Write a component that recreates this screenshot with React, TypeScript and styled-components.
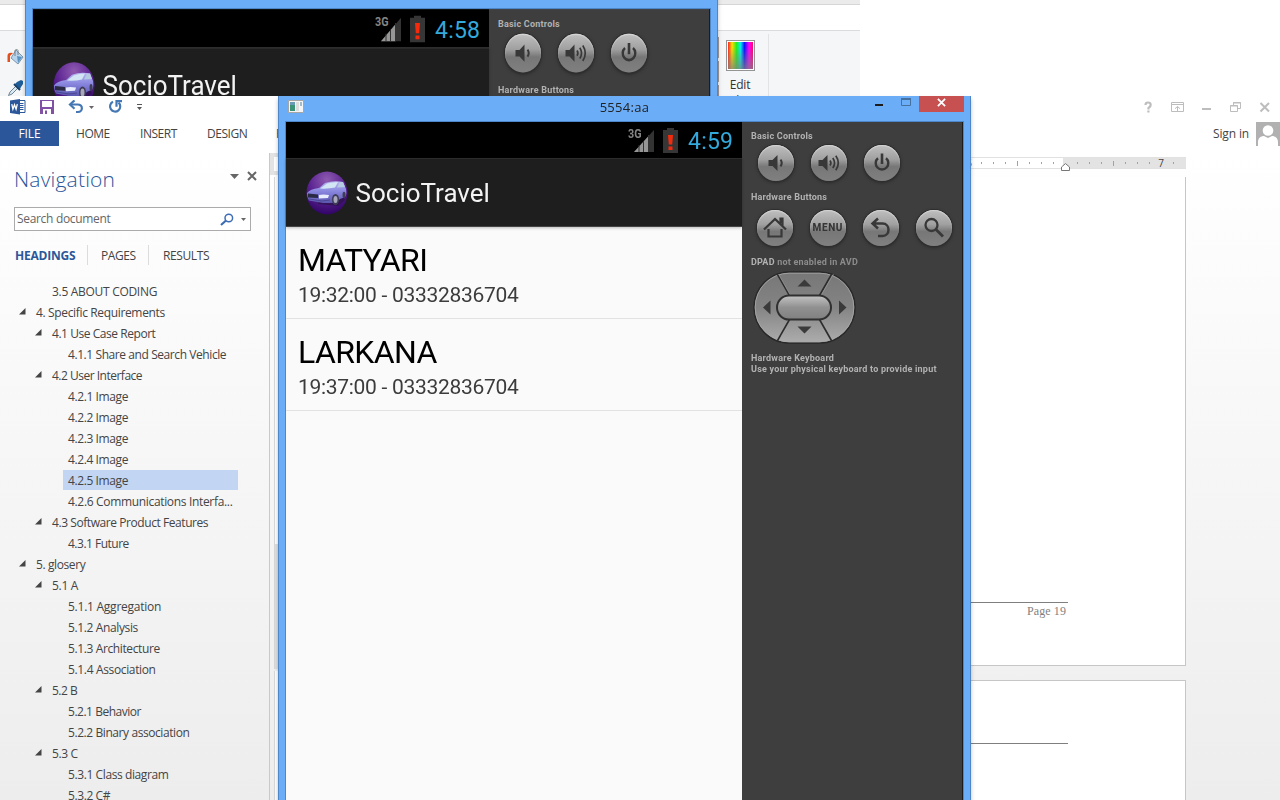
import React from "react";
import styled, { createGlobalStyle } from "styled-components";

const GlobalStyle = createGlobalStyle`
  * { box-sizing: border-box; }
  html, body { margin: 0; padding: 0; }
  body { width: 1280px; height: 800px; overflow: hidden; background: #fff; }
  svg { display: block; flex: none; }
`;

const UI = `"Open Sans", "Noto Sans", sans-serif`;
const DROID = `Roboto, "Noto Sans", sans-serif`;

const Desktop = styled.div`
  position: relative;
  display: flex;
  flex-direction: column;
  width: 1280px;
  height: 800px;
  overflow: hidden;
  font-family: ${UI};
`;

/* ---------- Paint window (top) ---------- */

const PaintWindow = styled.section`
  position: relative;
  flex: none;
  width: 860px;
  height: 96px;
  overflow: hidden;
  display: flex;
  flex-direction: column;
`;

const PaintTitle = styled.div`
  flex: none;
  height: 5px;
  background: #ebebeb;
  border-bottom: 1px solid #d6d6d6;
`;

const PaintTabs = styled.div`
  flex: none;
  height: 26px;
  background: #fff;
  border-bottom: 1px solid #dadbdc;
`;

const PaintRibbon = styled.div`
  flex: 1;
  display: flex;
  justify-content: space-between;
  background: #f5f6f7;
`;

const PaintTools = styled.div`
  display: flex;
  flex-direction: column;
  gap: 14px;
  padding: 17px 0 0 7px;
`;

const PaletteEdge = styled.div`
  flex: none;
  width: 1px;
  height: 59px;
  margin: 6px 0 0 auto;
  background: repeating-linear-gradient(to bottom, #a79a96 0, #a79a96 21px, #f5f6f7 21px, #f5f6f7 24px);
`;

const EditColors = styled.div`
  display: flex;
  flex-direction: column;
  align-items: center;
  width: 57px;
  height: 62px;
  margin: 3px 91px 0 -7px;
  padding-top: 6px;
  border-right: 1px solid #e2e3e4;
  font-size: 12px;
  line-height: 16px;
  letter-spacing: -0.2px;
  color: #333;
  span { width: 50px; text-align: center; }
`;

const Spectrum = styled.div`
  width: 29px;
  height: 31px;
  flex: none;
  margin: 0 0 6px 1px;
  border: 1px solid #949494;
  padding: 1px;
  background:
    linear-gradient(to bottom, rgba(128,128,128,0) 20%, rgba(128,128,128,.75)) content-box,
    linear-gradient(to right, #f22, #fd0 16%, #2e2 34%, #0ee 50%, #11f 66%, #f0f 84%, #f06) content-box,
    #fff;
  box-shadow: 0 0 0 1px #fff inset;
`;

/* ---------- Word window ---------- */

const WordWindow = styled.section`
  flex: 1;
  display: flex;
  flex-direction: column;
  min-height: 0;
  background: linear-gradient(to bottom, #fff 0, #fff 55px, #ededed 704px);
  color: #444;
`;

const WordTitleBar = styled.header`
  flex: none;
  display: flex;
  justify-content: space-between;
  height: 25px;
  padding: 0 9px 0 9px;
`;

const QuickAccess = styled.div`
  display: flex;
  align-items: center;
  height: 22px;
`;

const Gap = styled.i<{ $w: number }>`
  flex: none;
  width: ${(p) => p.$w}px;
`;

const Controls = styled.div`
  display: flex;
  align-items: center;
  height: 22px;
`;

const TabRow = styled.nav`
  flex: none;
  display: flex;
  align-items: center;
  height: 25px;
  font-size: 12px;
`;

const FileTab = styled.div`
  width: 59px;
  height: 25px;
  line-height: 25px;
  text-align: center;
  background: #2b579a;
  color: #fff;
  letter-spacing: -0.1px;
`;

const Tab = styled.div<{ $w: number }>`
  width: ${(p) => p.$w}px;
  line-height: 25px;
  white-space: nowrap;
  letter-spacing: -0.45px;
`;

const Account = styled.div`
  display: flex;
  align-items: center;
  gap: 7px;
  margin-left: auto;
  letter-spacing: -0.15px;
`;

const WordBody = styled.div`
  flex: 1;
  display: flex;
  min-height: 0;
`;

const NavPane = styled.aside`
  flex: none;
  width: 269px;
  padding: 20px 0 0 14px;
  overflow: hidden;
`;

const NavHeader = styled.div`
  display: flex;
  align-items: center;
  height: 26px;
  padding-right: 12px;
  svg { margin-bottom: 6px; }
`;

const NavTitle = styled.h1`
  flex: 1;
  margin: 0;
  font-size: 21px;
  font-weight: 300;
  letter-spacing: 0.2px;
  color: #2b579a;
`;

const SearchBox = styled.div`
  display: flex;
  align-items: center;
  width: 237px;
  height: 24px;
  margin-top: 15px;
  padding: 0 4px 0 2px;
  border: 1px solid #ababab;
  background: #fff;
  font-size: 12px;
  letter-spacing: -0.32px;
  color: #666;
`;

const SearchHint = styled.span`
  flex: 1;
  line-height: 18px;
`;

const NavTabs = styled.div`
  display: flex;
  align-items: center;
  height: 20px;
  margin-top: 14px;
  font-size: 12px;
`;

const NavTab = styled.div<{ $w: number; $pad: number; $active?: boolean; $last?: boolean }>`
  width: ${(p) => p.$w}px;
  height: 20px;
  line-height: 21px;
  padding-left: ${(p) => p.$pad}px;
  border-right: ${(p) => (p.$last ? "none" : "1px solid #dcdcdc")};
  font-weight: ${(p) => (p.$active ? 700 : 400)};
  color: ${(p) => (p.$active ? "#2b579a" : "#444")};
  letter-spacing: ${(p) => (p.$active ? -0.2 : -0.4)}px;
  white-space: nowrap;
`;

const Tree = styled.ul`
  list-style: none;
  margin: 16px 0 0;
  padding: 0;
  display: flex;
  flex-direction: column;
  gap: 1px;
`;

const TreeRow = styled.li<{ $level: number }>`
  display: flex;
  align-items: center;
  height: 20px;
  padding-left: ${(p) => p.$level * 16 + 1}px;
  font-size: 12px;
  white-space: nowrap;
`;

const Twisty = styled.span`
  width: 16px;
  padding: 0 0 1px 4px;
`;

const Label = styled.span<{ $selected?: boolean; $wide: boolean; $spacing: number }>`
  height: 20px;
  line-height: 22px;
  padding-left: 5px;
  width: ${(p) => (p.$wide ? "175px" : "auto")};
  background: ${(p) => (p.$selected ? "#c2d5f2" : "transparent")};
  letter-spacing: ${(p) => p.$spacing}px;
`;

const VerticalRuler = styled.div`
  flex: none;
  display: flex;
  flex-direction: column;
  width: 20px;
  margin-top: 7px;
  border-left: 1px solid #c9c9c9;
`;

const TabSelector = styled.div`
  flex: none;
  height: 22px;
  background: #fff;
  border: 4px solid #e3e3e3;
`;

const RulerTrack = styled.div<{ $h: number; $margin?: boolean }>`
  flex: none;
  height: ${(p) => p.$h}px;
  margin-left: 4px;
  margin-top: ${(p) => (p.$margin ? 0 : 2)}px;
  border-left: 1px solid #d8d8d8;
  background: ${(p) => (p.$margin ? "#e1e1e1" : "#fff")};
`;

const DocArea = styled.main`
  flex: 1;
  display: flex;
  flex-direction: column;
  padding: 11px 94px 0 0;
  overflow: hidden;
`;

const Ruler = styled.div`
  flex: none;
  display: flex;
  justify-content: flex-end;
  height: 12px;
  padding-right: 7px;
  border: 1px solid #e1e1e1;
  border-right: 0;
  background: linear-gradient(to left, #e3e3e3 123px, #fff 123px);
`;

const RulerCell = styled.div`
  position: relative;
  display: flex;
  justify-content: center;
  align-items: center;
  width: 12px;
  font-size: 10px;
  line-height: 12px;
  color: #444;
`;

const Tick = styled.i<{ $tall: boolean }>`
  width: 1px;
  height: ${(p) => (p.$tall ? 5 : 2)}px;
  background: #a2a2a2;
`;

const IndentMarker = styled.svg`
  position: absolute;
  left: 2px;
  top: 5px;
`;

const Page = styled.article<{ $h: number; $first?: boolean }>`
  flex: none;
  display: flex;
  flex-direction: column;
  align-items: flex-end;
  height: ${(p) => p.$h}px;
  margin-top: ${(p) => (p.$first ? 8 : 14)}px;
  padding-right: 117px;
  border: 1px solid #c6c6c6;
  border-top-width: ${(p) => (p.$first ? 0 : 1)}px;
  background: #fff;
  font-family: "Liberation Serif", serif;
  font-size: 12px;
`;

const Rule = styled.div<{ $top: number }>`
  width: 600px;
  height: 1px;
  flex: none;
  margin-top: ${(p) => p.$top}px;
  background: #7f7f7f;
`;

const PageNumber = styled.div`
  padding: 1px 2px 0 0;
  line-height: 15px;
  letter-spacing: 0.1px;
  color: #7f7f7f;
`;

/* ---------- Emulator windows ---------- */

const EmuWindow = styled.section<{ $x: number; $y: number; $h: number }>`
  position: absolute;
  left: ${(p) => p.$x}px;
  top: ${(p) => p.$y}px;
  width: 693px;
  height: ${(p) => p.$h}px;
  padding: 0 7px;
  border: 1px solid #4d87c9;
  border-width: 0 1px;
  background: #6badf6;
  box-shadow: 0 3px 4px rgba(0, 0, 0, 0.25);
  overflow: hidden;
`;

const EmuTitleBar = styled.header`
  display: flex;
  align-items: flex-start;
  height: 25px;
  padding: 4px 0 0 2px;
`;

const EmuTitle = styled.div`
  flex: 1;
  padding-left: 70px;
  margin-top: -2px;
  text-align: center;
  font-size: 13px;
  line-height: 18px;
  letter-spacing: 0.3px;
  color: #222;
`;

const WindowButtons = styled.div`
  display: flex;
  align-items: flex-start;
  margin: -4px -1px 0 0;
`;

const CloseButton = styled.div`
  display: flex;
  justify-content: center;
  width: 45px;
  height: 16px;
  margin-left: 8px;
  padding-top: 2px;
  background: #c75050;
`;

const Client = styled.div<{ $stretch: number }>`
  display: flex;
  width: 679px;
  height: 679px;
  margin-left: -1px;
  border: 1px solid #4d87c9;
  border-bottom: 0;
  transform: ${(p) => (p.$stretch === 1 ? "none" : `scaleY(${p.$stretch})`)};
  transform-origin: 0 0;
`;

const Screen = styled.div`
  display: flex;
  flex-direction: column;
  width: 456px;
  font-family: ${DROID};
  background: #fafafa;
`;

const StatusBar = styled.div`
  flex: none;
  display: flex;
  justify-content: flex-end;
  align-items: center;
  height: 36px;
  padding: 0 9px 0 0;
  background: #000;
`;

const Clock = styled.span`
  width: 45px;
  margin: 3px 0 0 10px;
  font-size: 23px;
  line-height: 33px;
  letter-spacing: 0.2px;
  color: #33a9dc;
  white-space: nowrap;
`;

const ActionBar = styled.div`
  flex: none;
  display: flex;
  align-items: center;
  gap: 7.5px;
  height: 69px;
  padding: 0 0 0 20px;
  background: #1e1e1e;
  border-top: 1px solid #2c2c2c;
  border-bottom: 1px solid #444;
  box-shadow: 0 1px 3px rgba(0, 0, 0, 0.25);
  z-index: 1;
`;

const AppName = styled.span`
  font-size: 26px;
  line-height: 30px;
  color: #f3f3f3;
`;

const Trip = styled.div`
  flex: none;
  display: flex;
  flex-direction: column;
  height: 92px;
  padding: 14px 0 0 12px;
  border-bottom: 1px solid #e2e2e2;
`;

const City = styled.div`
  font-size: 32px;
  line-height: 38px;
  letter-spacing: -0.6px;
  color: #000;
`;

const Detail = styled.div`
  padding-top: 1px;
  font-size: 21px;
  line-height: 30px;
  letter-spacing: -0.3px;
  color: #3c3c3c;
`;

const Skin = styled.div`
  flex: 1;
  padding: 9px 0 0 9px;
  border-right: 1px solid #1c1c1c;
  background: #3e3e3e;
  font-family: ${DROID};
  font-size: 9px;
  font-weight: 700;
  line-height: 11px;
  letter-spacing: 0.22px;
  color: #b2b2b2;
  white-space: nowrap;
`;

const SkinLabel = styled.div<{ $top?: number }>`
  margin-top: ${(p) => p.$top || 0}px;
  span { color: #8c8c8c; }
`;

const ButtonRow = styled.div<{ $top: number; $left: number }>`
  display: flex;
  gap: 17.3px;
  margin-top: ${(p) => p.$top}px;
  padding-left: ${(p) => p.$left}px;
`;

const RoundButton = styled.div`
  flex: none;
  display: flex;
  align-items: center;
  justify-content: center;
  width: 36px;
  height: 36px;
  border-radius: 50%;
  background: linear-gradient(to bottom, #bfbfbf, #a0a0a0 40%, #777 60%, #808080);
  box-shadow: 0 0 0 1px #2f2f2f, 0 1px 3px 1px #2a2a2a, inset 0 1px 1px #d6d6d6;
  font-size: 10px;
  font-weight: 800;
  line-height: 13px;
  letter-spacing: 0.6px;
  color: #363636;
`;

/* ---------- Drawings ---------- */

const BucketIcon = () => (
  <svg width="17" height="18" viewBox="0 0 17 18">
    <path d="M9 2 16 9l-5 7-7-6z" fill="#b9d5ee" stroke="#6f8ea8" strokeWidth=".9" />
    <path d="M10 8l5 1-4 6z" fill="#5b94c4" />
    <path d="M8 8V2.500q1.500-3 3 0V7" fill="none" stroke="#777" strokeWidth=".9" />
    <path d="M.5 14V8q0-4 5.500-3L3 8v6z" fill="#e1501f" />
  </svg>
);

const DropperIcon = () => (
  <svg width="17" height="17" viewBox="0 0 17 17">
    <path d="M1.500 15.500 3 12l6-6 2 2-6 6z" fill="#dceaf4" stroke="#60788a" strokeWidth=".9" />
    <path d="M8 4l5 5 1-2 2-3V1l-2-1-4 2z" fill="#1e5e99" />
    <path d="M7 4l6 6" stroke="#153e69" strokeWidth="2" />
  </svg>
);

const WordLogo = () => (
  <svg width="18" height="18" viewBox="0 0 18 18">
    <path d="M8 2.500h8v12H8z" fill="#fff" stroke="#2b579a" />
    <path d="M10 5.500h4.500M10 7.500h4.500M10 9.500h4.500M10 11.500h4.500" stroke="#2b579a" strokeWidth="1" />
    <path d="M1 2.500 11 1v15.500L1 15z" fill="#2b579a" />
    <path d="M2.800 6.200l1.100 5L5.500 6.700l1.600 4.500 1.200-5" fill="none" stroke="#fff" strokeWidth="1.300" />
  </svg>
);

const SaveIcon = () => (
  <svg width="14" height="14" viewBox="0 0 14 14">
    <path d="M0 0h14v14H0z" fill="#8151a5" />
    <path d="M2 1h10v6H2zM3 9h8v5H3z" fill="#fff" />
    <path d="M5 10.500h2V14H5z" fill="#8151a5" />
  </svg>
);

const UndoIcon = () => (
  <svg width="16" height="14" viewBox="0 0 16 14">
    <path d="M2 4.500h7.500c6 0 5.500 7.500.5 7.500H8" fill="none" stroke="#4478b4" strokeWidth="2.200" />
    <path d="M6.500.400 2 4.500l4.500 4.200" fill="none" stroke="#4478b4" strokeWidth="2.200" />
  </svg>
);

const RedoIcon = () => (
  <svg width="15" height="14" viewBox="0 0 15 14">
    <path d="M5 1.800A5.100 5.100 0 1 0 10.500 2.600" fill="none" stroke="#4478b4" strokeWidth="2.200" />
    <path d="M8.500 6.700V1.200H14" fill="none" stroke="#4478b4" strokeWidth="2.200" />
  </svg>
);

const Caret = ({ w = 5, color = "#666" }: { w?: number; color?: string }) => (
  <svg width={w} height={Math.ceil(w / 2)} viewBox="0 0 10 5" preserveAspectRatio="none">
    <path d="M0 0h10L5 5z" fill={color} />
  </svg>
);

const CrossIcon = ({ size, color, width = 2 }: { size: number; color: string; width?: number }) => (
  <svg width={size} height={size} viewBox="0 0 10 10">
    <path d="M1 1l8 8M9 1 1 9" stroke={color} strokeWidth={width} />
  </svg>
);

const CustomizeIcon = () => (
  <svg width="5" height="7" viewBox="0 0 5 7">
    <path d="M0 0h5v1H0zM0 3h5L2.500 6z" fill="#555" />
  </svg>
);

const WordControlsIcon = () => (
  <svg width="128" height="14" viewBox="0 0 128 14" fill="none" stroke="#bdbdbd">
    <path d="M2.500 5Q2.500 2.500 5 2.500t2.700 2T5.500 8v1.500" strokeWidth="2.200" />
    <path d="M4.300 10.500h2.200v2H4.300z" fill="#bdbdbd" stroke="none" />
    <path d="M28.500 2.500h12v9h-12zM28.500 4.500h12M34.500 11V6.500M32 8.700l2.500-2.200L37 8.700" />
    <path d="M59 9h9" strokeWidth="2" />
    <path d="M90.500 5.500V2.500h7v6h-3M87.500 5.500h7v6h-7zM90 3h8M87 6h8" />
    <path d="M117.500 3l8.500 8.500M126 3l-8.500 8.500" strokeWidth="2" />
  </svg>
);

const Avatar = () => (
  <svg width="24" height="24" viewBox="0 0 24 24">
    <path d="M0 0h24v24H0z" fill="#b1b1b1" />
    <circle cx="12" cy="8.500" r="5.300" fill="#fff" />
    <path d="M2 24v-4c0-4 3-6 6-6l4 2 4-2c3 0 6 2 6 6v4z" fill="#fff" />
  </svg>
);

const SearchDocIcon = () => (
  <svg width="14" height="13" viewBox="0 0 14 13">
    <circle cx="8.800" cy="5" r="3.800" fill="none" stroke="#3e6db5" strokeWidth="1.500" />
    <path d="M6 7.500 1 12" stroke="#3e6db5" strokeWidth="2.200" />
  </svg>
);

const TwistyIcon = () => (
  <svg width="7" height="7" viewBox="0 0 7 7">
    <path d="M6.500 0v6.500H0z" fill="#444" />
  </svg>
);

const SignalIcon = () => (
  <svg width="27" height="26" viewBox="0 0 27 26">
    <text x="0" y="11" fontSize="12" fontWeight="700" textLength="13.500" lengthAdjust="spacingAndGlyphs" fill="#858585" fontFamily="Roboto, sans-serif">3G</text>
    <path d="M6 25 26 3v22z" fill="#333" />
    <path d="M6 25 20.500 9v16z" fill="#969696" />
    <path d="M11 18v7M15.500 14v11M20.500 8v17" stroke="#333" />
  </svg>
);

const BatteryIcon = () => (
  <svg width="15" height="25" viewBox="0 0 15 25">
    <path d="M4 0h7v2h4v23H0V2h4z" fill="#363636" />
    <path d="M5 7h5l-.8 9.500H5.800zM5.500 18.500h4V22h-4z" fill="#f52a0c" />
  </svg>
);

const AppLogo = ({ id }: { id: string }) => (
  <svg width="42" height="44" viewBox="0 0 42 44">
    <defs>
      <radialGradient id={`${id}-ball`} cx=".5" cy=".2" r=".85">
        <stop offset="0" stopColor="#8f5bb0" />
        <stop offset=".5" stopColor="#5c2492" />
        <stop offset="1" stopColor="#2c0060" />
      </radialGradient>
      <linearGradient id={`${id}-body`} x1="0" y1="0" x2="0" y2="1">
        <stop offset="0" stopColor="#b9b8f4" />
        <stop offset=".5" stopColor="#8583dc" />
        <stop offset="1" stopColor="#5b57ae" />
      </linearGradient>
    </defs>
    <ellipse cx="21" cy="22" rx="20.500" ry="21.500" fill={`url(#${id}-ball)`} />
    <path d="M12 33 32 35l7-6-4-6-22 6z" fill="#24103f" opacity=".6" />
    <path d="M1 22q3-4 12-5l6-5q9-3 18-1l3 7q1 6-1 8l-5 2-4 4H17L3 29.500q-2-3-2-7.500z" fill={`url(#${id}-body)`} />
    <path d="M14 17.500l7-5q5-1.500 11-1.500l-3 5.500q-7 1.500-15 1z" fill="#d2e6f4" />
    <path d="M34 11h3l2 5-8 .5z" fill="#b5cbe0" />
    <path d="M2 22.500l10 1v3.500l-10-.5z" fill="#2a2a44" />
    <path d="M13 24q4-1 10 0l-1 3-9 .5z" fill="#e8ecff" />
    <path d="M3 28l13 2 8-1" fill="none" stroke="#4b4794" />
    <ellipse cx="29.500" cy="28.500" rx="3.500" ry="5.500" fill="#403c56" />
    <ellipse cx="29.500" cy="28.500" rx="2" ry="3.600" fill="#a8a8bd" />
    <ellipse cx="38" cy="24" rx="1.500" ry="3.200" fill="#403c56" />
  </svg>
);

const glyph = { fill: "none", stroke: "#383838", strokeWidth: 2 };

const SpeakerIcon = ({ loud }: { loud?: boolean }) => (
  <svg width="26" height="22" viewBox="0 0 26 22" {...glyph}>
    <path
      d={loud ? "M2.500 8h4l5-5v16l-5-5h-4z" : "M5.500 8h4l5-5v16l-5-5h-4z"}
      fill="#383838"
      stroke="none"
    />
    {loud ? (
      <path d="M14 8.500q1.800 2.500 0 5M16.800 6q3.500 5 0 10M19.800 3.800q5 7.200 0 14.400" strokeWidth="1.700" />
    ) : (
      <path d="M17.500 7.700q2.500 3.300 0 6.600" />
    )}
  </svg>
);

const PowerIcon = () => (
  <svg width="20" height="20" viewBox="0 0 20 20" {...glyph}>
    <path d="M6 5.300a6.300 6.300 0 1 0 8 0" strokeWidth="2.400" />
    <path d="M10 .5v10.500" strokeWidth="2.600" />
  </svg>
);

const HomeIcon = () => (
  <svg width="26" height="24" viewBox="0 0 26 24" {...glyph}>
    <path d="M2 13.500 13 3l11 10.500" strokeWidth="2.300" />
    <path d="M18.500 7.500V2.500h2v7M6.500 13v7.500h13V13" strokeWidth="2.200" />
  </svg>
);

const BackIcon = () => (
  <svg width="22" height="22" viewBox="0 0 22 22" {...glyph}>
    <path d="M8 1.500 2.500 6.500 8 11.500M2.500 6.500h10c8 0 8 12.500 0 12.500H8" strokeWidth="2.500" />
  </svg>
);

const FindIcon = () => (
  <svg width="24" height="24" viewBox="0 0 24 24" {...glyph}>
    <circle cx="9.500" cy="9" r="6" strokeWidth="2.300" />
    <path d="M14 13.500 21 20.500" strokeWidth="2.800" />
  </svg>
);

const DPad = ({ id }: { id: string }) => (
  <svg width="103" height="73" viewBox="0.5 0.5 103 73">
    <defs>
      <linearGradient id={`${id}-pad`} x1="0" y1="0" x2="0" y2="1">
        <stop offset="0" stopColor="#777" />
        <stop offset=".5" stopColor="#848484" />
        <stop offset="1" stopColor="#adadad" />
      </linearGradient>
      <linearGradient id={`${id}-ok`} x1="0" y1="0" x2="0" y2="1">
        <stop offset="0" stopColor="#c4c4c4" />
        <stop offset=".5" stopColor="#909090" />
        <stop offset="1" stopColor="#808080" />
      </linearGradient>
    </defs>
    <rect x="1.500" y="1.500" width="101" height="71" rx="35.500" fill={`url(#${id}-pad)`} stroke="#292929" strokeWidth="1.500" />
    <rect x="2.700" y="2.700" width="98.600" height="68.600" rx="34" fill="none" stroke="#a9a9a9" strokeWidth=".8" />
    <path d="M24.500 3 37 25M79.500 3 67 25M24.500 71 37 49M79.500 71 67 49" stroke="#2d2d2d" strokeWidth="1.600" />
    <path d="M26 3.500 38 25M81 3.500 68.500 25" stroke="#a0a0a0" strokeWidth=".6" />
    <rect x="24.500" y="25" width="54" height="24" rx="12" fill={`url(#${id}-ok)`} stroke="#303030" strokeWidth="2" />
    <path d="M52 9l7 7H45zM52 63l-7-7h14zM10.500 37l7.500-7v14zM94 37l-7.500-7v14z" fill="#3a3a3a" />
  </svg>
);

const EmuIcon = () => (
  <svg width="16" height="13" viewBox="0 0 16 13">
    <path d="M.5.500h15v12H.5z" fill="#f5f5f5" stroke="#a6a6a6" />
    <path d="M2 2h5v9H2z" fill="#3c9179" />
    <path d="M2 2h5v3H2z" fill="#6a9bb5" />
    <path d="M8 2h3v9H8z" fill="#ddd" />
    <path d="M12 2h2v4h-2z" fill="#a1bdcb" />
  </svg>
);

const MinMaxIcon = () => (
  <svg width="36" height="12" viewBox="0 0 36 12">
    <path d="M0 8h8v2H0z" fill="#1c1c1c" />
    <path d="M26.500 3h9v6.500h-9z" fill="none" stroke="#44719f" />
    <path d="M26 2h10v2H26z" fill="#44719f" />
  </svg>
);

/* ---------- Composition ---------- */

const trips = [
  { city: "MATYARI", detail: "19:32:00 - 03332836704" },
  { city: "LARKANA", detail: "19:37:00 - 03332836704" },
];

const Emulator = ({ id, time, stretch = 1 }: { id: string; time: string; stretch?: number }) => (
  <Client $stretch={stretch}>
    <Screen>
      <StatusBar>
        <SignalIcon />
        <Gap $w={8} />
        <BatteryIcon />
        <Clock>{time}</Clock>
      </StatusBar>
      <ActionBar>
        <AppLogo id={id} />
        <AppName>SocioTravel</AppName>
      </ActionBar>
      {trips.map((t) => (
        <Trip key={t.city}>
          <City>{t.city}</City>
          <Detail>{t.detail}</Detail>
        </Trip>
      ))}
    </Screen>
    <Skin>
      <SkinLabel>Basic Controls</SkinLabel>
      <ButtonRow $top={3} $left={6.5}>
        <RoundButton><SpeakerIcon /></RoundButton>
        <RoundButton><SpeakerIcon loud /></RoundButton>
        <RoundButton><PowerIcon /></RoundButton>
      </ButtonRow>
      <SkinLabel $top={11}>Hardware Buttons</SkinLabel>
      <ButtonRow $top={6.5} $left={5.5}>
        <RoundButton><HomeIcon /></RoundButton>
        <RoundButton>MENU</RoundButton>
        <RoundButton><BackIcon /></RoundButton>
        <RoundButton><FindIcon /></RoundButton>
      </ButtonRow>
      <SkinLabel $top={11.5}>DPAD <span>not enabled in AVD</span></SkinLabel>
      <ButtonRow $top={3} $left={2}>
        <DPad id={id} />
      </ButtonRow>
      <SkinLabel $top={9}>Hardware Keyboard</SkinLabel>
      <SkinLabel>Use your physical keyboard to provide input</SkinLabel>
    </Skin>
  </Client>
);

type Heading = { text: string; level: number; open?: boolean; selected?: boolean; spacing?: number };

const headings: Heading[] = [
  { text: "3.5 ABOUT CODING", level: 1 },
  { text: "4. Specific Requirements", level: 0, open: true, spacing: -0.35 },
  { text: "4.1 Use Case Report", level: 1, open: true, spacing: -0.45 },
  { text: "4.1.1 Share and Search Vehicle", level: 2, spacing: -0.42 },
  { text: "4.2 User Interface", level: 1, open: true, spacing: -0.5 },
  { text: "4.2.1 Image", level: 2, spacing: -0.4 },
  { text: "4.2.2 Image", level: 2, spacing: -0.4 },
  { text: "4.2.3 Image", level: 2, spacing: -0.4 },
  { text: "4.2.4 Image", level: 2, spacing: -0.4 },
  { text: "4.2.5 Image", level: 2, spacing: -0.4, selected: true },
  { text: "4.2.6 Communications Interfa...", level: 2, spacing: -0.33 },
  { text: "4.3 Software Product Features", level: 1, open: true, spacing: -0.43 },
  { text: "4.3.1 Future", level: 2, spacing: -0.5 },
  { text: "5. glosery", level: 0, open: true, spacing: -0.4 },
  { text: "5.1 A", level: 1, open: true },
  { text: "5.1.1 Aggregation", level: 2, spacing: -0.25 },
  { text: "5.1.2 Analysis", level: 2, spacing: -0.37 },
  { text: "5.1.3 Architecture", level: 2, spacing: -0.38 },
  { text: "5.1.4 Association", level: 2, spacing: -0.35 },
  { text: "5.2 B", level: 1, open: true, spacing: -0.5 },
  { text: "5.2.1 Behavior", level: 2, spacing: -0.48 },
  { text: "5.2.2 Binary association", level: 2, spacing: -0.42 },
  { text: "5.3 C", level: 1, open: true, spacing: -0.4 },
  { text: "5.3.1 Class diagram", level: 2, spacing: -0.4 },
  { text: "5.3.2 C#", level: 2, spacing: -0.4 },
];

const rulerCells = Array.from({ length: 18 }, (_, i) => i);

export default function App() {
  return (
    <Desktop>
      <GlobalStyle />
      <PaintWindow>
        <PaintTitle />
        <PaintTabs />
        <PaintRibbon>
          <PaintTools>
            <BucketIcon />
            <DropperIcon />
          </PaintTools>
          <PaletteEdge />
          <EditColors>
            <Spectrum />
            <span>Edit</span>
            <span>colors</span>
          </EditColors>
        </PaintRibbon>
        <EmuWindow $x={25} $y={-17} $h={140}>
          <EmuTitleBar />
          <Emulator id="back" time="4:58" stretch={1.075} />
        </EmuWindow>
      </PaintWindow>

      <WordWindow>
        <WordTitleBar>
          <QuickAccess>
            <WordLogo />
            <Gap $w={13} />
            <SaveIcon />
            <Gap $w={14} />
            <UndoIcon />
            <Gap $w={5} />
            <Caret />
            <Gap $w={14} />
            <RedoIcon />
            <Gap $w={14} />
            <CustomizeIcon />
          </QuickAccess>
          <Controls><WordControlsIcon /></Controls>
        </WordTitleBar>
        <TabRow>
          <FileTab>FILE</FileTab>
          <Gap $w={17} />
          <Tab $w={64}>HOME</Tab>
          <Tab $w={67}>INSERT</Tab>
          <Tab $w={69}>DESIGN</Tab>
          <Tab $w={80}>PAGE LAYOUT</Tab>
          <Account>
            Sign in
            <Avatar />
          </Account>
        </TabRow>
        <WordBody>
          <NavPane>
            <NavHeader>
              <NavTitle>Navigation</NavTitle>
              <Caret w={9} />
              <Gap $w={8} />
              <CrossIcon size={10} color="#666" />
            </NavHeader>
            <SearchBox>
              <SearchHint>Search document</SearchHint>
              <SearchDocIcon />
              <Gap $w={7} />
              <Caret />
            </SearchBox>
            <NavTabs>
              <NavTab $w={74} $pad={1} $active>HEADINGS</NavTab>
              <NavTab $w={61} $pad={13}>PAGES</NavTab>
              <NavTab $w={80} $pad={14} $last>RESULTS</NavTab>
            </NavTabs>
            <Tree>
              {headings.map((h) => (
                <TreeRow key={h.text} $level={h.level}>
                  <Twisty>{h.open && <TwistyIcon />}</Twisty>
                  <Label $selected={h.selected} $wide={h.level === 2} $spacing={h.spacing ?? -0.3}>
                    {h.text}
                  </Label>
                </TreeRow>
              ))}
            </Tree>
          </NavPane>
          <VerticalRuler>
            <TabSelector />
            <RulerTrack $h={367} />
            <RulerTrack $h={125} $margin />
            <RulerTrack $h={140} />
          </VerticalRuler>
          <DocArea>
            <Ruler>
              {rulerCells.map((i) => (
                <RulerCell key={i}>
                  {i === 0 && "5"}
                  {i === 16 && "7"}
                  {i === 8 && (
                    <IndentMarker width="9" height="8" viewBox="0 0 9 8">
                      <path d="M.5 7.500V4L4.500.600 8.500 4v3.500z" fill="#fff" stroke="#777" />
                    </IndentMarker>
                  )}
                  {i % 8 !== 0 && <Tick $tall={i % 4 === 0} />}
                </RulerCell>
              ))}
            </Ruler>
            <Page $h={489} $first>
              <Rule $top={425} />
              <PageNumber>Page 19</PageNumber>
            </Page>
            <Page $h={160}>
              <Rule $top={62} />
            </Page>
          </DocArea>
        </WordBody>
      </WordWindow>

      <EmuWindow $x={278} $y={96} $h={704}>
        <EmuTitleBar>
          <EmuIcon />
          <EmuTitle>5554:aa</EmuTitle>
          <WindowButtons>
            <MinMaxIcon />
            <CloseButton>
              <CrossIcon size={9} color="#fff" />
            </CloseButton>
          </WindowButtons>
        </EmuTitleBar>
        <Emulator id="front" time="4:59" />
      </EmuWindow>
    </Desktop>
  );
}
